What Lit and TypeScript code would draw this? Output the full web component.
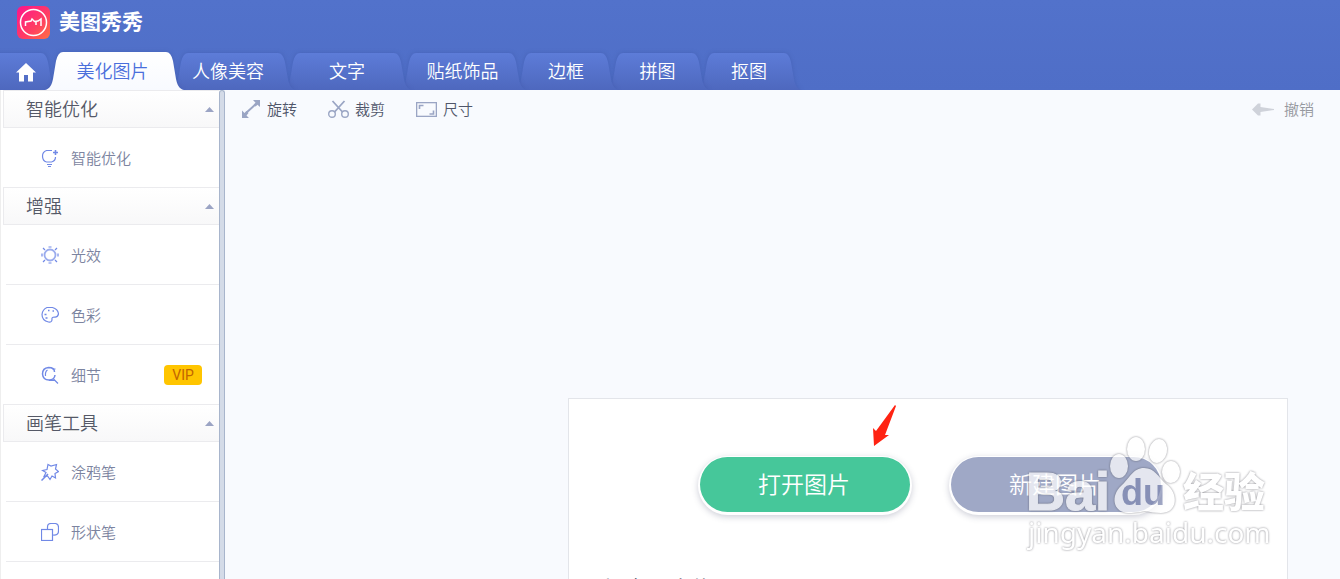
import { LitElement, html, svg, css } from "lit";
import { customElement } from "lit/decorators.js";

interface Tab {
  label: string;
  width: number;
  kind?: "home" | "active" | "lead";
}

const TABS: Tab[] = [
  { label: "首页", width: 52, kind: "home" },
  { label: "美化图片", width: 125, kind: "active" },
  { label: "人像美容", width: 112, kind: "lead" },
  { label: "文字", width: 116 },
  { label: "贴纸饰品", width: 115 },
  { label: "边框", width: 92 },
  { label: "拼图", width: 91 },
  { label: "抠图", width: 92 },
];

const ICONS: Record<string, unknown> = {
  bulb: svg`<path d="M11 1.500H5.500Q1.500 3 1.500 7Q1.500 12 5.500 13H10.500Q14.500 12 14.500 8"/><path stroke-width="1.600" d="M14.500 1V6M12 3.500H17"/><path d="M6 15.500H11M7 17.500H10"/>`,
  sun: svg`<circle cx="9" cy="9" r="5.500" stroke-width="1.800" stroke-opacity="0.7"/><path d="M7.500 1H10.500M7.500 17H10.500M1 7.500V10.500M17 7.500V10.500"/><path d="M2 2L4 4M16 2L14 4M2 16L4 14M16 16L14 14"/>`,
  palette: svg`<path d="M6 1.500H11.500Q17 3 17.500 8Q16.500 11.500 13.500 11Q10.500 11 11 13.500Q11 16.500 7.500 16Q1 14.500 1 8.500Q1.500 3.500 6 1.500Z"/><path stroke-width="1.600" d="M7 4.500H8.500M11.500 5H13M3.500 8.500H5.500M4.500 12H6.500"/>`,
  detail: svg`<path stroke-width="1.500" d="M13.500 6Q13.500 1.500 7.500 1.500Q1.500 2 1.500 8Q2 14 8 14Q13.500 14 14 9"/><path d="M6.500 4Q4 5.500 4.500 10M11.500 3H14.500M12.500 13L17 17.500M8 14.500H14"/>`,
  doodle: svg`<path d="M7 1.500L10 3L15.500 1.500L14.500 6L17.500 8.500L14 10.500L14.500 15L11 13L9 16.500L6.500 13L3 13.500L5 9.500L1.500 7.500L6 6.500Z"/><path stroke-width="1.500" d="M0.500 17.500L7 11"/>`,
  shape: svg`<path d="M6.500 6V4Q6.500 0.500 10 0.500H14.500Q17.500 1 17.500 4V8Q17.500 12.500 12 12"/><rect x="0.500" y="6.500" width="11" height="11"/>`,
};

const SECTIONS = [
  { title: "智能优化", items: [{ icon: "bulb", label: "智能优化" }] },
  {
    title: "增强",
    items: [
      { icon: "sun", label: "光效" },
      { icon: "palette", label: "色彩" },
      { icon: "detail", label: "细节", vip: true },
    ],
  },
  {
    title: "画笔工具",
    items: [
      { icon: "doodle", label: "涂鸦笔" },
      { icon: "shape", label: "形状笔" },
    ],
  },
] as { title: string; items: { icon: string; label: string; vip?: boolean }[] }[];

const FONT = css`"Noto Sans CJK SC", sans-serif`;

@customElement("top-bar")
class TopBar extends LitElement {
  static styles = css`
    :host {
      display: flex;
      flex-direction: column;
      justify-content: space-between;
      height: 90px;
      overflow: hidden;
      background: linear-gradient(#5272cb, #4f6ec7);
      color: #fff;
    }
    .brand {
      display: flex;
      align-items: flex-start;
      gap: 9px;
      padding: 6px 0 0 17px;
    }
    .name {
      margin: 0;
      font: 700 21px/28px ${FONT};
    }
    .tabs {
      display: flex;
      align-items: flex-end;
    }
    .tab {
      position: relative;
      display: grid;
      flex: none;
      height: 38px;
      margin: 0 -7px;
      padding: 0;
      border: 0;
      background: none;
      color: #fff;
      font: 350 18px/36px ${FONT};
      cursor: pointer;
    }
    .tab > * {
      grid-area: 1 / 1;
    }
    .shape {
      display: block;
      overflow: visible;
      filter: drop-shadow(0 0 2px rgba(40, 60, 130, 0.25));
    }
    .label {
      position: relative;
      place-self: start center;
    }
    .lead .label {
      padding-right: 10px;
    }
    .active .label {
      padding-right: 4px;
    }
    .active {
      color: #4a6fdc;
    }
    .home-icon {
      display: block;
      margin: 11px 1px 0 0;
    }
  `;

  private outline(t: Tab, w: number) {
    const top = t.kind === "active" ? 0 : 1;
    const left =
      t.kind === "home"
        ? `M0 38V${top}`
        : `M0 38C5 37 7 32 8 27L11 ${top + 9}Q13 ${top} 18 ${top}`;
    return `${left}H${w - 18}Q${w - 13} ${top} ${w - 11} ${top + 9}L${w - 8} 27C${w - 7} 32 ${w - 5} 37 ${w} 38Z`;
  }

  private tab(t: Tab, i: number) {
    const w = t.width + 14;
    const active = t.kind === "active";
    return html`<button
      class="tab ${t.kind ?? ""}"
      style="width:${w}px;z-index:${active ? 20 : 9 - i}"
      aria-label=${t.label}
    >
      <svg class="shape" width=${w} height="38" viewBox="0 0 ${w} 38">
        <defs>
          <linearGradient id="fill-${i}" x1="0" y1="0" x2="0" y2="1">
            <stop offset="0" stop-color=${active ? "#ffffff" : "#5d7cd8"} />
            <stop offset="1" stop-color=${active ? "#f8faff" : "#4e68be"} />
          </linearGradient>
        </defs>
        <path d=${this.outline(t, w)} fill="url(#fill-${i})" />
      </svg>
      <span class="label">
        ${t.kind === "home"
          ? html`<svg class="home-icon" width="20" height="19" viewBox="0 0 20 19">
              <path fill="#fff" d="M10 0L20 9.500H17V18.500H12V12H8V18.500H3V9.500H0Z" />
            </svg>`
          : t.label}
      </span>
    </button>`;
  }

  render() {
    return html`
      <div class="brand">
        <svg width="33" height="33" viewBox="0 0 33 33" role="img" aria-label="美图">
          <defs>
            <linearGradient id="logo" x1="0" y1="0" x2="1" y2="1">
              <stop offset="0.1" stop-color="#fd1a86" />
              <stop offset="0.6" stop-color="#ff3f62" />
              <stop offset="1" stop-color="#ff7042" />
            </linearGradient>
          </defs>
          <rect width="33" height="33" rx="6" fill="url(#logo)" />
          <g fill="none" stroke="#fff" stroke-width="1.500">
            <circle cx="16.500" cy="16.500" r="13" />
            <path d="M8.500 20V16L14 15L15 13L17.500 15.500L21 15L24 13V20M19 15.500V19" />
          </g>
        </svg>
        <h1 class="name">美图秀秀</h1>
      </div>
      <nav class="tabs">${TABS.map((t, i) => this.tab(t, i))}</nav>
    `;
  }
}

@customElement("side-bar")
class SideBar extends LitElement {
  static styles = css`
    :host {
      display: block;
      width: 219px;
      box-sizing: border-box;
      border-left: 1px solid #eee;
      padding-left: 2px;
      background: #fff;
      overflow: hidden;
    }
    .head {
      display: flex;
      align-items: center;
      justify-content: space-between;
      width: 100%;
      height: 38px;
      box-sizing: border-box;
      padding: 0 5px 0 22px;
      border: 1px solid #ebebee;
      border-right: 0;
      background: linear-gradient(#fff, #f8f8f9);
      color: #555967;
      font: 350 18px/34px ${FONT};
      text-align: left;
    }
    .title {
      padding-bottom: 2px;
    }
    .items {
      list-style: none;
      margin: 0;
      padding: 0 0 0 3px;
    }
    .items li + li {
      border-top: 1px solid #ebebee;
    }
    .section:last-child li:last-child {
      border-bottom: 1px solid #ebebee;
    }
    .item {
      display: flex;
      align-items: center;
      width: 100%;
      height: 59px;
      padding: 0 17px 0 35px;
      border: 0;
      background: none;
      color: #7c84a0;
      font: 350 15px/22px ${FONT};
    }
    .icon {
      margin-right: 12px;
      fill: none;
      stroke: #7189e6;
      stroke-width: 1.2;
    }
    .vip {
      margin-left: auto;
      width: 38px;
      border-radius: 4px;
      background: #ffc500;
      color: #c26400;
      font: 400 14px/20px Roboto, sans-serif;
      text-align: center;
    }
  `;

  render() {
    return SECTIONS.map(
      (s) => html`<section class="section">
        <button class="head">
          <span class="title">${s.title}</span>
          <svg width="9" height="5" viewBox="0 0 9 5"><path fill="#9ba4c4" d="M4.500 0L9 5H0Z" /></svg>
        </button>
        <ul class="items">
          ${s.items.map(
            (it) => html`<li>
              <button class="item">
                <svg class="icon" width="18" height="18" viewBox="0 0 18 18">${ICONS[it.icon]}</svg>
                ${it.label}${it.vip ? html`<span class="vip">VIP</span>` : ""}
              </button>
            </li>`
          )}
        </ul>
      </section>`
    );
  }
}

@customElement("baidu-mark")
class BaiduMark extends LitElement {
  static styles = css`
    :host {
      position: absolute;
      top: 30px;
      right: 10px;
      opacity: 0.72;
      filter: drop-shadow(0 0 1px rgba(70, 70, 80, 0.85));
      pointer-events: none;
    }
    svg {
      display: block;
    }
    .bold {
      font: 700 54px "Liberation Sans", sans-serif;
      stroke: #fff;
    }
    .du {
      font: 700 36px "Liberation Sans", sans-serif;
      fill: #7f88b0;
    }
    .cn {
      font: 900 41px "Noto Sans CJK SC", sans-serif;
    }
    .url {
      font: 400 28px "Noto Sans", sans-serif;
    }
  `;
  render() {
    return html`<svg width="250" height="130" viewBox="0 0 250 130" fill="#fff">
      <text class="bold" x="-1" y="81">Bai</text>
      <ellipse cx="92" cy="37" rx="9" ry="12" />
      <ellipse cx="109" cy="20" rx="9" ry="12" />
      <ellipse cx="131" cy="22" rx="9" ry="12" transform="rotate(12 131 22)" />
      <ellipse cx="144" cy="43" rx="9" ry="11" />
      <path d="M117 39C128 39 131 48 139 55C152 64 151 84 134 84Q126 84 118 82Q108 84 101 84C85 83 84 66 94 57C103 49 106 39 117 39Z" />
      <text class="du" x="94" y="76">du</text>
      <text class="cn" x="156" y="78">经验</text>
      <text class="url" x="1" y="114">jingyan.baidu.com</text>
    </svg>`;
  }
}

@customElement("app-root")
class AppRoot extends LitElement {
  static styles = css`
    :host {
      display: grid;
      grid-template-rows: auto minmax(0, 1fr);
      height: 100vh;
      overflow: hidden;
      background: #f8fafe;
      font-family: ${FONT};
    }
    .body {
      display: grid;
      grid-template-columns: 219px 6px minmax(0, 1fr);
      min-height: 0;
    }
    .splitter {
      box-sizing: border-box;
      border: 1px solid #a8b5cc;
      border-bottom: 0;
      border-radius: 3px 3px 0 0;
      background: #d4dbe8;
    }
    .work {
      display: flex;
      flex-direction: column;
      min-height: 0;
    }
    .tools {
      display: flex;
      align-items: center;
      gap: 31px;
      height: 38px;
      padding: 0 26px 0 16px;
    }
    .tool {
      display: flex;
      align-items: center;
      gap: 6px;
      padding: 0;
      border: 0;
      background: none;
      color: #50566a;
      font: 350 15px/22px ${FONT};
    }
    .tool svg {
      fill: none;
      stroke: #9aa5c4;
    }
    .tool.undo {
      gap: 10px;
      margin-left: auto;
      color: #96989f;
    }
    .card {
      position: relative;
      flex: 1;
      align-self: flex-end;
      box-sizing: border-box;
      width: 100%;
      max-width: 720px;
      margin: 270px 52px 0 0;
      border: 1px solid #e3e5ea;
      border-bottom: 0;
      background: #fff;
      overflow: hidden;
    }
    .actions {
      display: flex;
      gap: 41px;
      padding: 58px 0 0 131px;
    }
    .action {
      width: 210px;
      height: 55px;
      padding: 0 2px 2px 0;
      border: 0;
      border-radius: 28px;
      box-shadow: 0 1px 0 2px #fff, 0 3px 6px 2px rgba(60, 65, 100, 0.25);
      background: #9fa8c6;
      color: #fff;
      font: 350 23px/53px ${FONT};
    }
    .open {
      background: #46c79a;
    }
    .recent {
      margin: 61px 0 0 22px;
      color: #333a55;
      font: 400 20px/30px ${FONT};
    }
    .pointer {
      position: absolute;
      top: 6px;
      left: 303px;
    }
  `;

  render() {
    return html`
      <top-bar></top-bar>
      <div class="body">
        <side-bar></side-bar>
        <div class="splitter"></div>
        <main class="work">
          <div class="tools">
            <button class="tool">
              <svg width="20" height="18" viewBox="0 0 20 18">
                <path fill="#9aa5c4" stroke="none" d="M12 0H19V7L16.500 4.800L14.500 6.500L12.700 4.800L14.500 2.800ZM1 18V10.500L3.500 13L5.500 11L7.500 13L5.500 15.500L8 18Z" />
                <path d="M5 13L15 4" stroke-width="2" />
              </svg>
              旋转
            </button>
            <button class="tool">
              <svg width="21" height="19" viewBox="0 0 21 19">
                <circle cx="4" cy="14" r="3.300" stroke-width="1.400" />
                <circle cx="17" cy="14" r="3.300" stroke-width="1.400" />
                <path stroke-width="1.800" d="M4.500 1L14.500 12M16.500 1L6.500 12" />
              </svg>
              裁剪
            </button>
            <button class="tool">
              <svg width="21" height="15" viewBox="0 0 21 15">
                <rect x="0.500" y="0.500" width="20" height="14" stroke-width="1.600" />
                <path d="M3.500 7V3.500H7.500M13.500 12H17.500V8.500" stroke-width="1.600" />
              </svg>
              尺寸
            </button>
            <button class="tool undo">
              <svg width="22" height="13" viewBox="0 0 22 13">
                <path fill="#cfd2da" stroke="none" d="M0 6.500L6 0.500H8.500V4L22 6V7L8.500 9V12.500H6Z" />
              </svg>
              撤销
            </button>
          </div>
          <section class="card">
            <div class="actions">
              <button class="action open">打开图片</button>
              <button class="action">新建图片</button>
            </div>
            <h2 class="recent">近期打开文件</h2>
            <svg class="pointer" width="26" height="42" viewBox="0 0 26 42" aria-hidden="true">
              <path fill="#ff2312" d="M23 0L24 1L13 30H17L2 41L1 23L4 26Z" />
            </svg>
            <baidu-mark></baidu-mark>
          </section>
        </main>
      </div>
    `;
  }
}
